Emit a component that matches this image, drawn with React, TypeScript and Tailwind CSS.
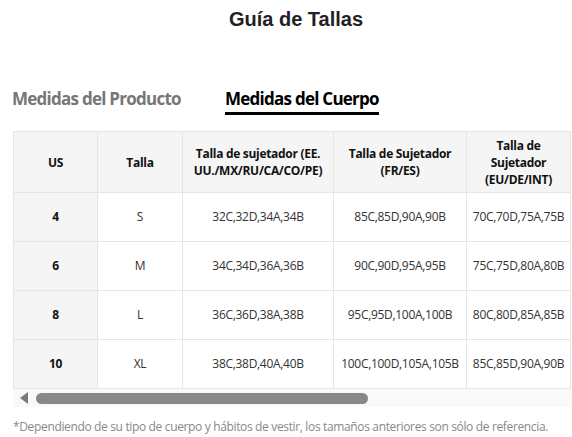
import React from "react";

const sans = { fontFamily: '"Open Sans", "Noto Sans", sans-serif' };

const headers = [
  "US",
  "Talla",
  "Talla de sujetador (EE. UU./MX/RU/CA/CO/PE)",
  "Talla de Sujetador (FR/ES)",
  "Talla de Sujetador (EU/DE/INT)",
];

const rows = [
  ["4", "S", "32C,32D,34A,34B", "85C,85D,90A,90B", "70C,70D,75A,75B"],
  ["6", "M", "34C,34D,36A,36B", "90C,90D,95A,95B", "75C,75D,80A,80B"],
  ["8", "L", "36C,36D,38A,38B", "95C,95D,100A,100B", "80C,80D,85A,85B"],
  ["10", "XL", "38C,38D,40A,40B", "100C,100D,105A,105B", "85C,85D,90A,90B"],
];

export default function App() {
  return (
    <div className="w-[572px] h-[437px] bg-white overflow-hidden relative" style={sans}>
      <div
        className="h-[33px] pt-[5px] pl-[20px] text-center text-[20px] leading-[28px] font-bold text-[#222]"
        style={{ fontFamily: '"Liberation Sans", Arial, sans-serif' }}
      >
        Guía de Tallas
      </div>

      <div className="mt-[54px] flex items-start pl-[12px]">
        <div className="w-[213px] text-[17px] leading-[24px] font-bold tracking-[-0.75px] text-[#777]">
          Medidas del Producto
        </div>
        <div className="text-[17px] leading-[24px] font-bold tracking-[-0.75px] text-black pb-[1px] border-b-[3px] border-black">
          Medidas del Cuerpo
        </div>
      </div>

      <div className="mt-[16px] ml-[13px]">
        <div className="grid grid-cols-[84px_85px_151px_133px_104px] w-[558px] border-l border-t border-[#e6e6e6]">
          {headers.map((h, i) => (
            <div
              key={i}
              className={`h-[61px] flex items-center justify-center text-center bg-[#f5f5f5] border-r border-b border-[#e6e6e6] text-[12px] leading-[17px] font-bold tracking-[-0.3px] text-[#111] ${
                i === 4 ? "px-[14px]" : "px-[4px]"
              }`}
            >
              {h}
            </div>
          ))}
          {rows.map((r, ri) =>
            r.map((c, ci) => (
              <div
                key={`${ri}-${ci}`}
                className={`h-[49px] flex items-center justify-center text-center border-r border-b border-[#e6e6e6] text-[12px] tracking-[-0.3px] ${
                  ci === 0
                    ? "bg-[#f5f5f5] font-bold text-[#111]"
                    : "bg-white text-[#333]"
                }`}
              >
                {c}
              </div>
            ))
          )}
        </div>
        <div className="h-[18px] w-[559px] bg-[#f9f9f9] flex items-center">
          <svg width="10" height="12" viewBox="0 0 10 12" className="ml-[6px]">
            <polygon points="9,0 9,12 1,6" fill="#7a7a7a" />
          </svg>
          <div className="ml-[7px] w-[332px] h-[11px] rounded-full bg-[#888]" />
        </div>
      </div>

      <div className="mt-[12px] pl-[13px] text-[12px] leading-[16px] tracking-[-0.35px] text-[#888] whitespace-nowrap">
        *Dependiendo de su tipo de cuerpo y hábitos de vestir, los tamaños anteriores son sólo de referencia.
      </div>
    </div>
  );
}
